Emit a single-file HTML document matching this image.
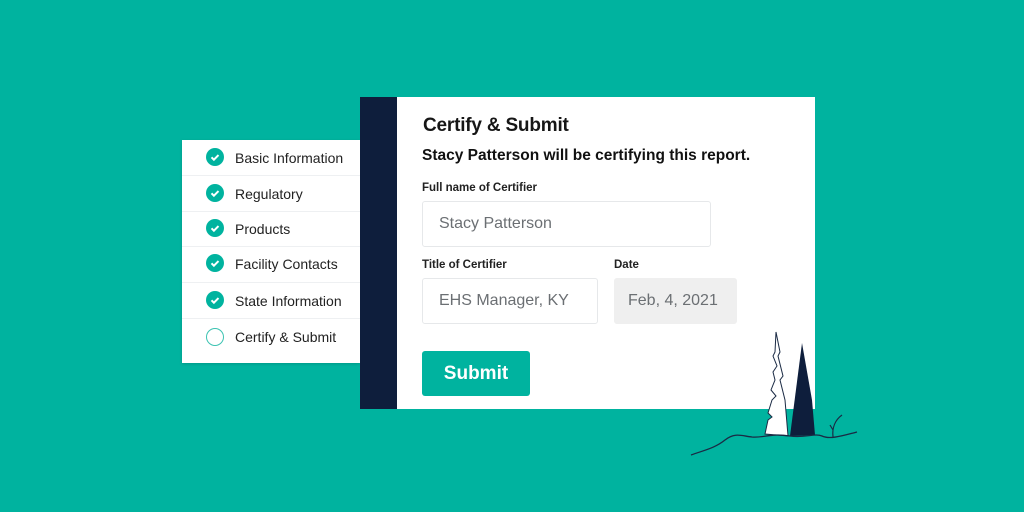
<!DOCTYPE html>
<html><head><style>
body{margin:0;width:1024px;height:512px;background:#00b39f;position:relative;overflow:hidden;font-family:"Liberation Sans",sans-serif;}
.abs{position:absolute}
.list{left:182px;top:140px;width:178px;height:223px;background:#fff;box-shadow:0 1px 3px rgba(0,0,0,.15)}
.row{position:absolute;left:0;width:178px;height:35px;border-bottom:1px solid #eef0f2;font-size:14px;color:#222;}
.row span{position:absolute;left:53px;top:10px}
.ic{position:absolute;left:24px;top:8px;width:18px;height:18px;border-radius:50%;background:#00b39f}
.card{left:360px;top:97px;width:455px;height:312px;background:#fff}
.bar{left:360px;top:97px;width:37px;height:312px;background:#0e1e3c}
.inp{position:absolute;border:1px solid #e6e8ea;border-radius:3px;font-size:16px;color:#6b6f73;box-sizing:border-box;padding-left:16px;line-height:44px}
.lab{position:absolute;font-size:11.5px;font-weight:bold;color:#222}
</style></head><body>
<div class="abs list">
 <div class="row" style="top:0"><div class="ic"><svg width="18" height="18"><path d="M5.5 9.3l2.4 2.4 4.6-4.6" stroke="#fff" stroke-width="2" fill="none"/></svg></div><span>Basic Information</span></div>
 <div class="row" style="top:36px"><div class="ic"><svg width="18" height="18"><path d="M5.5 9.3l2.4 2.4 4.6-4.6" stroke="#fff" stroke-width="2" fill="none"/></svg></div><span>Regulatory</span></div>
 <div class="row" style="top:71px"><div class="ic"><svg width="18" height="18"><path d="M5.5 9.3l2.4 2.4 4.6-4.6" stroke="#fff" stroke-width="2" fill="none"/></svg></div><span>Products</span></div>
 <div class="row" style="top:106px;height:36px"><div class="ic"><svg width="18" height="18"><path d="M5.5 9.3l2.4 2.4 4.6-4.6" stroke="#fff" stroke-width="2" fill="none"/></svg></div><span>Facility Contacts</span></div>
 <div class="row" style="top:143px"><div class="ic"><svg width="18" height="18"><path d="M5.5 9.3l2.4 2.4 4.6-4.6" stroke="#fff" stroke-width="2" fill="none"/></svg></div><span>State Information</span></div>
 <div class="row" style="top:179px;border:none"><div class="ic" style="background:#fff;border:1.5px solid #3cc3b2;width:16px;height:16px;top:9px"></div><span>Certify &amp; Submit</span></div>
</div>
<div class="abs card">
 <div class="abs" style="left:63px;top:18px;font-size:19px;font-weight:bold;color:#161616;letter-spacing:-0.2px">Certify &amp; Submit</div>
 <div class="abs" style="left:62px;top:50px;font-size:15.5px;font-weight:bold;color:#111">Stacy Patterson will be certifying this report.</div>
 <div class="lab" style="left:62px;top:85px">Full name of Certifier</div>
 <div class="inp" style="left:62px;top:104px;width:289px;height:46px">Stacy Patterson</div>
 <div class="lab" style="left:62px;top:162px">Title of Certifier</div>
 <div class="lab" style="left:254px;top:162px">Date</div>
 <div class="inp" style="left:62px;top:181px;width:176px;height:46px">EHS Manager, KY</div>
 <div class="inp" style="left:254px;top:181px;width:123px;height:46px;background:#efefef;border-color:#efefef;padding-left:13px">Feb, 4, 2021</div>
 <div class="abs" style="left:62px;top:254px;width:108px;height:45px;background:#00b39f;border-radius:3px;color:#fff;font-size:19px;font-weight:bold;text-align:center;line-height:45px">Submit</div>
</div>
<div class="abs bar"></div>
<svg class="abs" style="left:0;top:0" width="1024" height="512">
 <path d="M776 332 L780 352 L778 356 L783 376 L780 380 L785 400 L788 436 L765 434 L768 420 L772 417 L768 413 L772 400 L776 396 L771 390 L775 380 L773 372 L777 366 L773 356 L775 352 Z" fill="#fff" stroke="#1a2a44" stroke-width="1"/>
 <path d="M802 343 L790 436 L815 435 L812 400 Z" fill="#0e1e3c"/>
 <path d="M691 455 C705 450 715 448 725 440 C735 432 742 436 752 437 C765 438 770 433 790 436 C805 438 815 433 822 436 C830 440 845 435 857 432" stroke="#1a2a44" stroke-width="1.3" fill="none"/>
 <path d="M833 437 C832 428 835 420 842 415 M833 430 L830 425" stroke="#1a2a44" stroke-width="1.2" fill="none"/>
</svg>
</body></html>
